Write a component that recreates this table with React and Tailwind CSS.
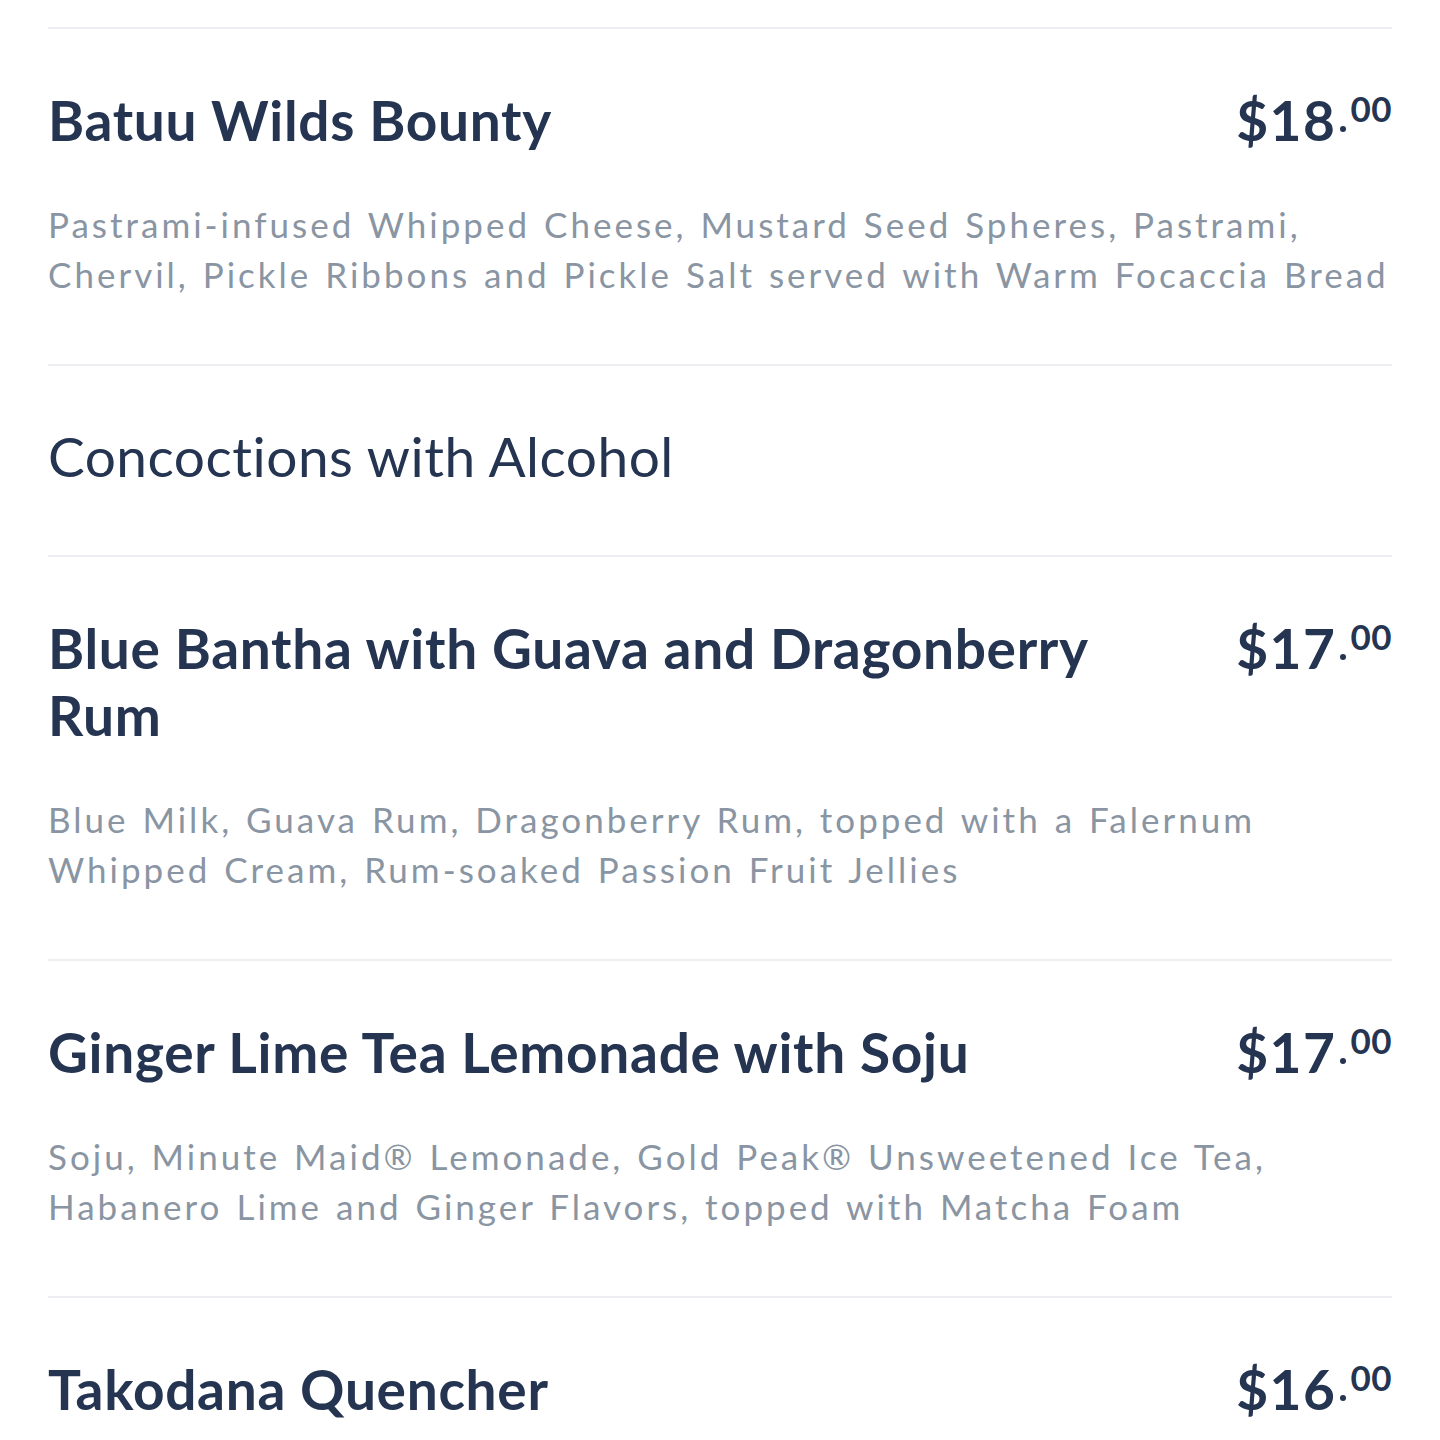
import React from "react";

const items = [
  {
    type: "item",
    name: "Batuu Wilds Bounty",
    price: "18",
    desc: "Pastrami-infused Whipped Cheese, Mustard Seed Spheres, Pastrami, Chervil, Pickle Ribbons and Pickle Salt served with Warm Focaccia Bread",
  },
  { type: "heading", name: "Concoctions with Alcohol" },
  {
    type: "item",
    name: "Blue Bantha with Guava and Dragonberry Rum",
    price: "17",
    desc: "Blue Milk, Guava Rum, Dragonberry Rum, topped with a Falernum Whipped Cream, Rum-soaked Passion Fruit Jellies",
  },
  {
    type: "item",
    name: "Ginger Lime Tea Lemonade with Soju",
    price: "17",
    desc: "Soju, Minute Maid® Lemonade, Gold Peak® Unsweetened Ice Tea, Habanero Lime and Ginger Flavors, topped with Matcha Foam",
  },
  { type: "item", name: "Takodana Quencher", price: "16", desc: "" },
];

function Price({ value }) {
  return (
    <div className="flex items-start shrink-0 text-[#253551] font-bold">
      <span className="text-[55px] leading-[67px] tracking-[1.5px]">${value}</span>
      <span className="w-[6px] h-[6px] rounded-full bg-[#253551] mt-[39px] mx-[4px]" />
      <span className="text-[35px] leading-none mt-[4px] tracking-[0.5px]">00</span>
    </div>
  );
}

function MenuItem({ item }) {
  return (
    <div className="border-t-2 border-[#eceef1] pt-[58px] pb-[65px]">
      <div className="flex justify-between gap-[100px]">
        <h2 className="text-[55px] leading-[67px] font-bold text-[#253551] tracking-[0.7px]">
          {item.name}
        </h2>
        <Price value={item.price} />
      </div>
      {item.desc && (
        <p className="mt-[45px] text-[35px] leading-[50px] text-[#8a95a3] tracking-[3px] [word-spacing:2px]">
          {item.desc}
        </p>
      )}
    </div>
  );
}

function Heading({ item }) {
  return (
    <div className="border-t-2 border-[#eceef1] pt-[57px] pb-[65px]">
      <h2 className="text-[55px] leading-[67px] font-normal text-[#253551] tracking-[0.5px]">
        {item.name}
      </h2>
    </div>
  );
}

export default function App() {
  return (
    <div
      className="w-[1440px] h-[1440px] overflow-hidden bg-white px-12 pt-[27px]"
      style={{ fontFamily: "Lato, 'Noto Sans', sans-serif" }}
    >
      {items.map((it, i) =>
        it.type === "heading" ? (
          <Heading key={i} item={it} />
        ) : (
          <MenuItem key={i} item={it} />
        )
      )}
    </div>
  );
}
